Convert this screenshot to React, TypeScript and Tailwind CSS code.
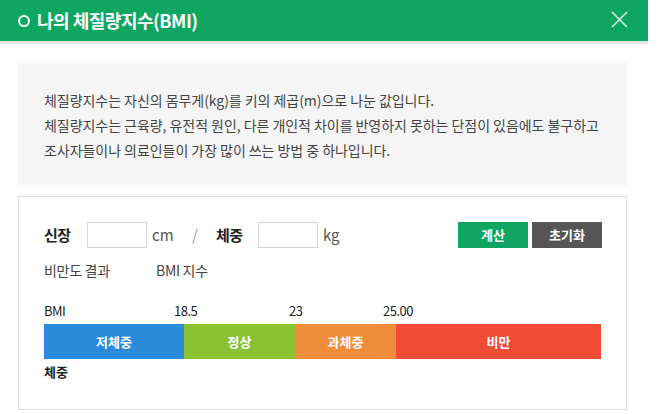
import React from "react";

const font = { fontFamily: '"Noto Sans CJK KR", "Noto Sans", sans-serif' };

export default function App() {
  return (
    <div className="w-[662px] h-[414px] bg-white overflow-hidden" style={font}>
      <div className="w-[648px]">
        <div className="h-[41px] bg-[#0ea661] flex items-center justify-between pl-[18px] pr-[20px]">
          <div className="flex items-center text-white text-[18px] font-bold tracking-[-0.5px]">
            <span className="w-[12px] h-[12px] rounded-full border-[2px] border-white mr-[7px] mt-[1px]" />
            <span>나의 체질량지수(BMI)</span>
          </div>
          <svg width="17" height="17" viewBox="0 0 17 17" className="mb-[2px]">
            <path d="M1 1L16 16M16 1L1 16" stroke="#d8f3e5" strokeWidth="1.6" />
          </svg>
        </div>
        <div className="h-[3px] bg-[#dde6e2]" />
        <div className="pl-[18px] pt-[19px]">
          <div className="w-[609px] h-[122px] bg-[#f5f5f5] pt-[25px] pl-[26px] text-[14px] leading-[25px] text-[#444] tracking-[-0.05px]">
            <p>체질량지수는 자신의 몸무게(kg)를 키의 제곱(m)으로 나눈 값입니다.</p>
            <p>체질량지수는 근육량, 유전적 원인, 다른 개인적 차이를 반영하지 못하는 단점이 있음에도 불구하고</p>
            <p>조사자들이나 의료인들이 가장 많이 쓰는 방법 중 하나입니다.</p>
          </div>
          <div className="mt-[11px] w-[609px] h-[214px] border border-[#dddddd] pt-[25px] pl-[25px] pr-[24px]">
            <div className="flex items-center h-[26px]">
              <span className="text-[15px] font-bold text-[#222] w-[43px] tracking-[-0.5px]">신장</span>
              <div className="w-[60px] h-[26px] border border-[#d6d6d6] bg-white" />
              <span className="ml-[5px] text-[15px] text-[#555] w-[40px]">cm</span>
              <span className="text-[15px] text-[#999] w-[24px]">/</span>
              <span className="text-[15px] font-bold text-[#222] w-[42px] tracking-[-0.5px]">체중</span>
              <div className="w-[60px] h-[26px] border border-[#d6d6d6] bg-white" />
              <span className="ml-[5px] text-[15px] text-[#555]">kg</span>
              <div className="ml-auto flex gap-[4px]">
                <button className="w-[70px] h-[26px] bg-[#0ea661] text-white text-[13px] font-bold">계산</button>
                <button className="w-[70px] h-[26px] bg-[#565656] text-white text-[13px] font-bold">초기화</button>
              </div>
            </div>
            <div className="flex items-center mt-[12px] h-[20px] text-[14px] text-[#444] tracking-[-0.3px]">
              <span className="w-[112px]">비만도 결과</span>
              <span>BMI 지수</span>
            </div>
            <div className="flex items-center mt-[22px] h-[18px] text-[13px] text-[#222] tracking-[-0.5px]">
              <span className="w-[130px]">BMI</span>
              <span className="w-[115px]">18.5</span>
              <span className="w-[94px]">23</span>
              <span>25.00</span>
            </div>
            <div className="flex mt-[4px] h-[35px] text-white text-[13px] font-bold">
              <div className="w-[140px] bg-[#2a8bdc] flex items-center justify-center">저체중</div>
              <div className="w-[111px] bg-[#8bc234] flex items-center justify-center">정상</div>
              <div className="w-[101px] bg-[#ef8d3a] flex items-center justify-center">과체중</div>
              <div className="w-[205px] bg-[#f24c37] flex items-center justify-center">비만</div>
            </div>
            <div className="mt-[3px] text-[13px] font-bold text-[#222]">체중</div>
          </div>
        </div>
      </div>
    </div>
  );
}
